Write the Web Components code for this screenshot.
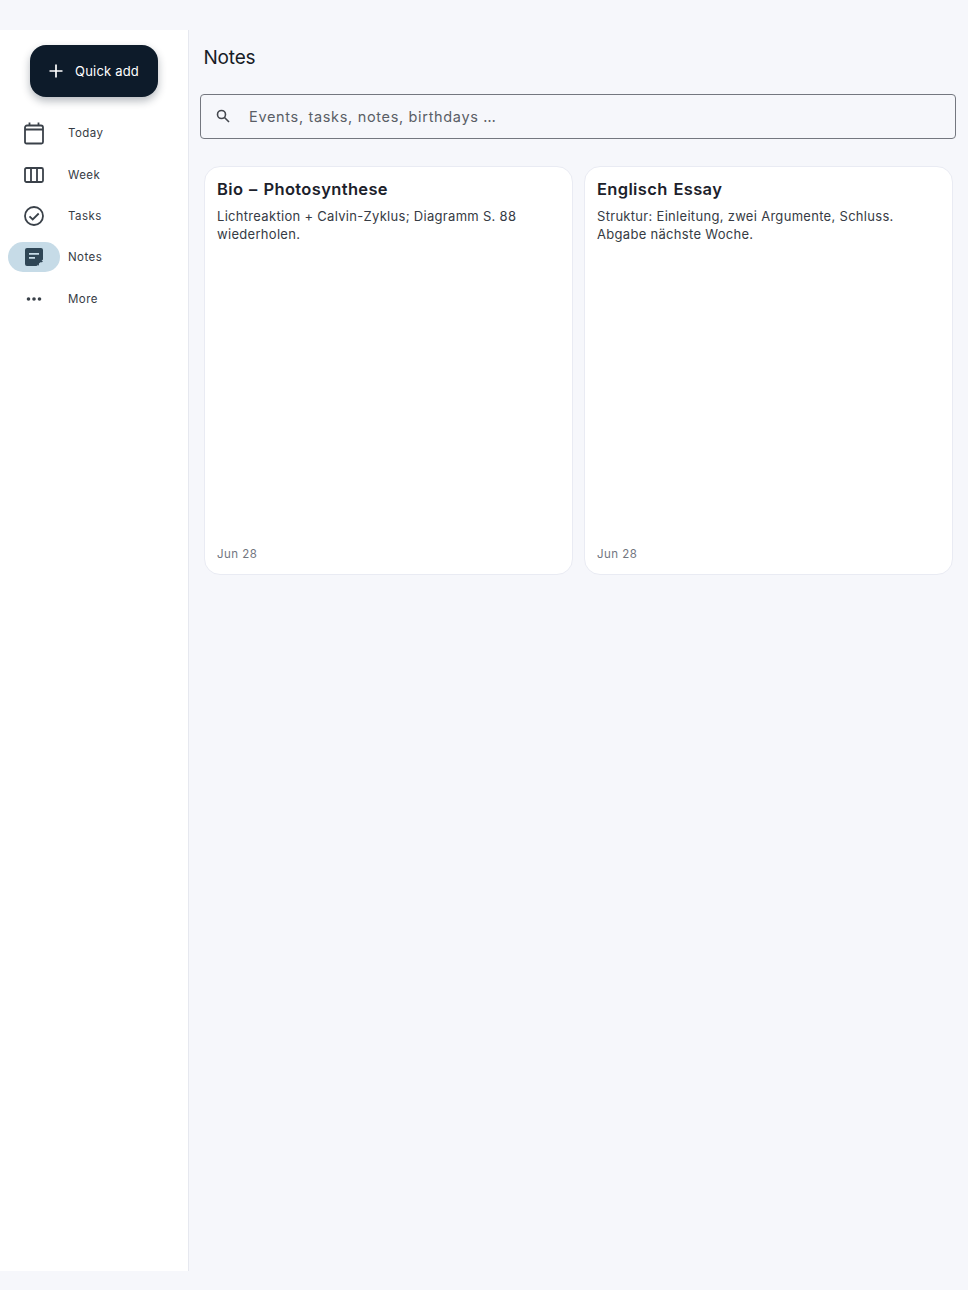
<!DOCTYPE html>
<html>
<head>
<meta charset="utf-8">
<title>Notes</title>
<style>
  html, body { margin: 0; height: 100%; background: #f6f7fb; }
  body { font-family: Inter, "Liberation Sans", sans-serif; font-optical-sizing: none; color: #171c26; }
</style>
</head>
<body>
<app-shell>
  <nav-rail slot="rail">
    <quick-add>Quick add</quick-add>
    <nav-item label="Today" icon="today"></nav-item>
    <nav-item label="Week" icon="week"></nav-item>
    <nav-item label="Tasks" icon="tasks"></nav-item>
    <nav-item label="Notes" icon="notes" active></nav-item>
    <nav-item label="More" icon="more"></nav-item>
  </nav-rail>
  <h-title>Notes</h-title>
  <search-box placeholder="Events, tasks, notes, birthdays …"></search-box>
  <notes-grid>
    <note-card title="Bio – Photosynthese" date="Jun 28">Lichtreaktion + Calvin-Zyklus; Diagramm S. 88 wiederholen.</note-card>
    <note-card title="Englisch Essay" date="Jun 28">Struktur: Einleitung, zwei Argumente, Schluss. Abgabe nächste Woche.</note-card>
  </notes-grid>
</app-shell>
<script>
const icons = {
  today: '<svg viewBox="0 0 24 24" fill="none" stroke="currentColor" stroke-width="1.800"><path d="M3 6.500a2 2 0 0 1 2-2h14a2 2 0 0 1 2 2V21a1.500 1.500 0 0 1-1.500 1.500h-15A1.500 1.500 0 0 1 3 21zM3 8.500h18M7.500 1.500v3M16.500 1.500v3"/></svg>',
  week: '<svg viewBox="0 0 24 24" fill="none" stroke="currentColor" stroke-width="1.800"><rect x="3" y="5" width="18" height="14" rx="1.500"/><path d="M9 5v14M15 5v14"/></svg>',
  tasks: '<svg viewBox="0 0 24 24" fill="none" stroke="currentColor" stroke-width="1.800"><circle cx="12" cy="12" r="9"/><path d="M7.500 12.300l3.200 3.200 6-6"/></svg>',
  notes: '<svg viewBox="0 0 24 24" fill="currentColor"><path fill-rule="evenodd" d="M5 3h14a2 2 0 0 1 2 2v9.500L14.500 21H5a2 2 0 0 1-2-2V5a2 2 0 0 1 2-2zM7 8v1.800h10V8zM7 12v1.800h6V12z"/><path d="M15.700 21v-4a1 1 0 0 1 1-1H21l-1 1.200h-3.100v2.800z"/></svg>',
  more: '<svg viewBox="0 0 24 24" fill="currentColor"><circle cx="6.500" cy="12" r="1.800"/><circle cx="12" cy="12" r="1.800"/><circle cx="17.500" cy="12" r="1.800"/></svg>'
};

class AppShell extends HTMLElement {
  constructor() {
    super();
    this.attachShadow({mode: 'open'}).innerHTML = `
    <style>
      :host { display: block; box-sizing: border-box; height: 1290px; padding: 30px 0 19px; }
      .layout { display: grid; grid-template-columns: 189px 1fr; height: 100%; }
      main { display: flex; flex-direction: column; min-width: 0; }
    </style>
    <div class="layout">
      <slot name="rail"></slot>
      <main><slot></slot></main>
    </div>`;
  }
}

class NavRail extends HTMLElement {
  constructor() {
    super();
    this.attachShadow({mode: 'open'}).innerHTML = `
    <style>
      :host { display: flex; flex-direction: column; background: #fff; border-right: 1px solid #e6e8ef; padding-top: 15px; }
    </style>
    <slot></slot>`;
  }
}

class QuickAdd extends HTMLElement {
  constructor() {
    super();
    this.attachShadow({mode: 'open'}).innerHTML = `
    <style>
      :host { display: flex; align-items: center; align-self: flex-start; box-sizing: border-box; margin: 0 0 15.700px 30px; width: 128px; height: 52px;
        padding-left: 17px; gap: 10px; background: #0d1b2a; color: #fff; border-radius: 16px;
        font-size: 13px; letter-spacing: .2px; box-shadow: 0 4px 8px rgba(13, 27, 42, .3); }
      svg { width: 18px; height: 18px; flex: none; }
    </style>
    <svg viewBox="0 0 18 18" fill="none" stroke="currentColor" stroke-width="1.700"><path d="M9 2.500v13M2.500 9h13"/></svg>
    <slot></slot>`;
  }
}

class NavItem extends HTMLElement {
  constructor() {
    super();
    const active = this.hasAttribute('active');
    this.attachShadow({mode: 'open'}).innerHTML = `
    <style>
      :host { display: flex; align-items: center; height: 41.300px; padding-left: 8px; }
      .pill { width: 52px; height: 30px; border-radius: 15px; display: flex; align-items: center; justify-content: center; color: ${active ? '#2f4656' : '#3a4149'}; background: ${active ? '#c6dbe7' : 'transparent'}; }
      .pill svg { width: 24px; height: 24px; }
      .label { margin-left: 8px; font-size: 11.500px; letter-spacing: .45px; color: #363b44; }
    </style>
    <div class="pill">${icons[this.getAttribute('icon')]}</div>
    <span class="label">${this.getAttribute('label')}</span>`;
  }
}

class HTitle extends HTMLElement {
  constructor() {
    super();
    this.attachShadow({mode: 'open'}).innerHTML = `
    <style>
      :host { display: block; padding: 15px 0 0 14.500px; height: 49px; font-size: 19px; line-height: 26px; letter-spacing: -.2px; color: #171c26; }
    </style>
    <slot></slot>`;
  }
}

class SearchBox extends HTMLElement {
  constructor() {
    super();
    this.attachShadow({mode: 'open'}).innerHTML = `
    <style>
      :host { display: flex; align-items: center; box-sizing: border-box; margin: 0 12px 0 11px; height: 44.500px; flex: none;
        border: 1px solid #74777f; border-radius: 4px; padding-left: 15px; }
      svg { width: 14px; height: 14px; flex: none; color: #44474e; }
      span { margin-left: 19px; font-size: 14.500px; letter-spacing: .67px; color: #5a5e66; }
    </style>
    <svg viewBox="0 0 14 14" fill="none" stroke="currentColor" stroke-width="1.600"><circle cx="5.500" cy="5.500" r="4"/><path d="M8.500 8.500l4.500 4.500"/></svg>
    <span>${this.getAttribute('placeholder')}</span>`;
  }
}

class NotesGrid extends HTMLElement {
  constructor() {
    super();
    this.attachShadow({mode: 'open'}).innerHTML = `
    <style>
      :host { display: grid; grid-template-columns: 368.500px 368.500px; column-gap: 11.500px; padding: 27.500px 0 0 15px; }
    </style>
    <slot></slot>`;
  }
}

class NoteCard extends HTMLElement {
  constructor() {
    super();
    this.attachShadow({mode: 'open'}).innerHTML = `
    <style>
      :host { display: flex; flex-direction: column; box-sizing: border-box; height: 409px; background: #fff;
        border: 1px solid #e9ebf3; border-radius: 16px; padding: 11px 12px 13px; }
      h3 { margin: 0; font-size: 16.500px; line-height: 22px; font-weight: 600; letter-spacing: .35px; word-spacing: 1.300px; color: #1c212b; }
      .body { flex: 1; margin-top: 6.600px; font-size: 13px; line-height: 18.500px; letter-spacing: .3px; color: #363b44; }
      .date { font-size: 11.500px; line-height: 14px; letter-spacing: .45px; color: #72767f; }
    </style>
    <h3>${this.getAttribute('title')}</h3>
    <div class="body"><slot></slot></div>
    <div class="date">${this.getAttribute('date')}</div>`;
  }
}

customElements.define('app-shell', AppShell);
customElements.define('nav-rail', NavRail);
customElements.define('quick-add', QuickAdd);
customElements.define('nav-item', NavItem);
customElements.define('h-title', HTitle);
customElements.define('search-box', SearchBox);
customElements.define('notes-grid', NotesGrid);
customElements.define('note-card', NoteCard);
</script>
</body>
</html>
